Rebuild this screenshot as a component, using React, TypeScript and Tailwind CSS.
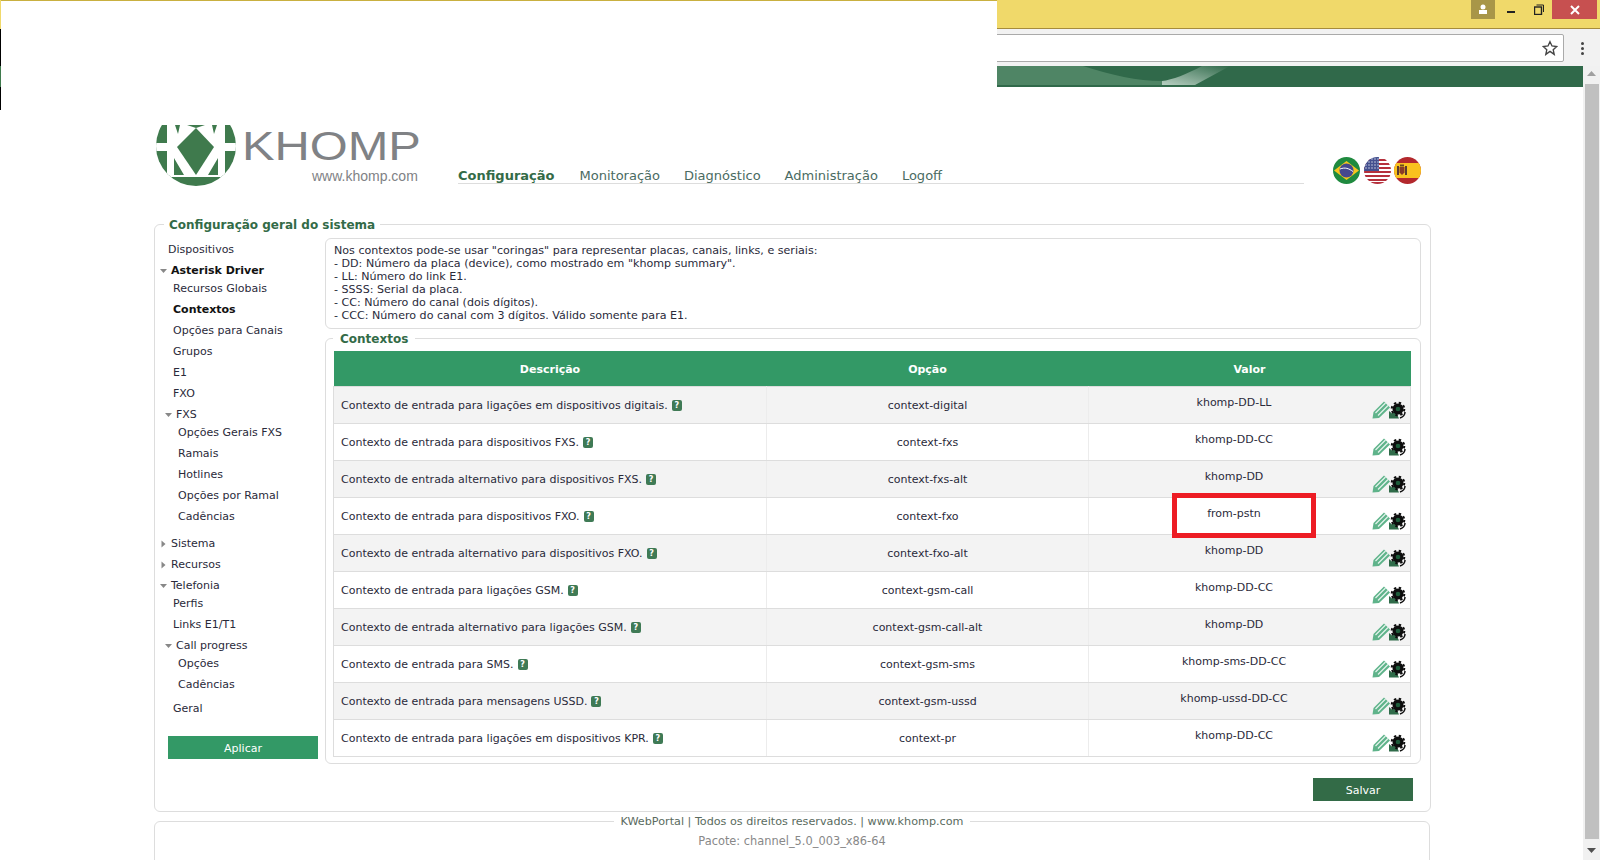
import React from "react";

const rows = [
  ["Contexto de entrada para ligações em dispositivos digitais.", "context-digital", "khomp-DD-LL"],
  ["Contexto de entrada para dispositivos FXS.", "context-fxs", "khomp-DD-CC"],
  ["Contexto de entrada alternativo para dispositivos FXS.", "context-fxs-alt", "khomp-DD"],
  ["Contexto de entrada para dispositivos FXO.", "context-fxo", "from-pstn"],
  ["Contexto de entrada alternativo para dispositivos FXO.", "context-fxo-alt", "khomp-DD"],
  ["Contexto de entrada para ligações GSM.", "context-gsm-call", "khomp-DD-CC"],
  ["Contexto de entrada alternativo para ligações GSM.", "context-gsm-call-alt", "khomp-DD"],
  ["Contexto de entrada para SMS.", "context-gsm-sms", "khomp-sms-DD-CC"],
  ["Contexto de entrada para mensagens USSD.", "context-gsm-ussd", "khomp-ussd-DD-CC"],
  ["Contexto de entrada para ligações em dispositivos KPR.", "context-pr", "khomp-DD-CC"],
];

function Arrow({ open }: { open: boolean }) {
  return (
    <svg width="8" height="8" viewBox="0 0 8 8" className="shrink-0">
      {open ? <path d="M0 2h7L3.500 6z" fill="#888" /> : <path d="M1.500 0.500v7L5.500 4z" fill="#888" />}
    </svg>
  );
}

function Leaf({ children, bold }: { children: string; bold?: boolean }) {
  return <div className={`h-[21px] leading-[18px] ${bold ? "font-bold text-[#111]" : ""}`}>{children}</div>;
}

function Head({ children, open, bold, h }: { children: string; open: boolean; bold?: boolean; h: string }) {
  return (
    <div className={`flex items-start ${h} leading-[18px]`}>
      <span className="w-[11px] pt-[5px]"><Arrow open={open} /></span>
      <span className={bold ? "font-bold text-[#111]" : ""}>{children}</span>
    </div>
  );
}

function Help() {
  return (
    <span className="inline-flex ml-[4px] w-[10px] h-[11px] items-center justify-center rounded-[2px] bg-[#3f7a55] text-white text-[8px] font-bold leading-none align-[1px]">?</span>
  );
}

function Actions() {
  return (
    <svg width="34" height="18" viewBox="0 0 34 18" className="shrink-0">
      <path d="M0.500 17.500l1-6.500L12 0.500l6 6L7 17z" fill="#5fb38a" />
      <path d="M3.500 12L13.500 2M6 14.500L16 4.500" stroke="#e4f4ec" strokeWidth="1.200" />
      <path d="M17 17.500V10l3 2.500 3-3 4 8z" fill="#2f6b49" />
      <circle cx="26" cy="8" r="5.500" fill="#0d0d0d" />
      <circle cx="26" cy="8" r="6.300" fill="none" stroke="#0d0d0d" strokeWidth="2" strokeDasharray="2.400 2.550" />
      <circle cx="26" cy="8" r="2.300" fill="#1d5c3a" />
      <path d="M33 11c0 3-2 5-5 6" stroke="#111" strokeWidth="1.500" fill="none" />
    </svg>
  );
}

function Logo() {
  return (
    <svg width="80" height="61" viewBox="0 0 80 61" className="shrink-0">
      <clipPath id="lc"><circle cx="40" cy="21" r="40" /></clipPath>
      <g clipPath="url(#lc)">
        <rect x="0" y="0" width="80" height="61" fill="#3f7a4d" />
        <path d="M11 0H69V52H11z" fill="#fff" />
        <path d="M0 18h11v8H0zM69 18h11v8H69z" fill="#fff" />
        <path d="M40 3L58 22 40 50 21 22z" fill="#3f7a4d" />
        <path d="M18 33L28 50H18zM62 33L52 50H62z" fill="#3f7a4d" />
        <path d="M19 0h5l-2 9zM61 0h-5l2 9zM31 0h18l-9 3z" fill="#3f7a4d" />
      </g>
    </svg>
  );
}

function Flags() {
  return (
    <div className="flex items-start h-fit pt-[70px] ml-[29px]">
      <svg width="27" height="27" viewBox="0 0 27 27">
        <circle cx="13.500" cy="13.500" r="13.500" fill="#1f8a3f" />
        <path d="M1 13.500L13.500 4 26 13.500 13.500 23z" fill="#f7c51e" />
        <circle cx="13.500" cy="13.500" r="7" fill="#45488f" />
        <path d="M7 12c5-2 9-.5 13 2.500" stroke="#fff" strokeWidth="1" fill="none" />
      </svg>
      <svg width="27" height="27" viewBox="0 0 27 27" className="ml-[4px]">
        <clipPath id="us"><circle cx="13.500" cy="13.500" r="13.500" /></clipPath>
        <g clipPath="url(#us)">
          <rect width="27" height="27" fill="#fff" />
          {[2, 6, 10, 14, 18, 22, 25].map((y) => <rect key={y} x="0" y={y} width="27" height="2" fill="#b5303c" />)}
          <rect width="15" height="14" fill="#44508f" />
          {[2, 5, 8, 11].map((y) => [2, 5, 8, 11, 14].map((x) => <circle key={`${x}-${y}`} cx={x} cy={y} r="0.7" fill="#dfe3f2" />))}
        </g>
      </svg>
      <svg width="27" height="27" viewBox="0 0 27 27" className="ml-[3px]">
        <clipPath id="es"><circle cx="13.500" cy="13.500" r="13.500" /></clipPath>
        <g clipPath="url(#es)">
          <rect width="27" height="27" fill="#b3282d" />
          <rect y="6" width="27" height="15" fill="#f9c21e" />
          <rect x="3" y="9" width="2" height="9" fill="#5a3a30" />
          <rect x="11" y="9" width="2" height="9" fill="#5a3a30" />
          <path d="M5.500 10h5v5.500l-2.500 2.500-2.500-2.500z" fill="#8a3a28" />
          <rect x="6" y="7.500" width="4" height="2" fill="#6a4a20" />
        </g>
      </svg>
    </div>
  );
}

export default function App() {
  return (
    <div className="relative w-[1600px] h-[860px] overflow-hidden bg-white font-['DejaVu_Sans',sans-serif] text-[11px] text-[#2a2a3a] flex flex-col">
      {/* browser title bar */}
      <div className="h-[29px] shrink-0 bg-[#f0d96a] border-b border-[#a68c3c] flex justify-end items-start">
        <div className="w-[24px] h-[19px] bg-[#a89648] flex items-center justify-center mr-[1px]">
          <svg width="10" height="11" viewBox="0 0 10 11"><circle cx="5" cy="3" r="2.500" fill="#fff" /><rect x="1" y="6" width="8" height="4" fill="#fff" /></svg>
        </div>
        <div className="w-[30px] h-[19px] flex items-center justify-center">
          <div className="w-[8px] h-[2px] mt-[5px] bg-[#222]" />
        </div>
        <div className="w-[26px] h-[19px] flex items-center justify-center">
          <svg width="10" height="11" viewBox="0 0 10 11" fill="none" stroke="#222" strokeWidth="1"><rect x="0.500" y="3" width="7" height="7.500" strokeWidth="1.400" /><path d="M2.500 1h7v7" /></svg>
        </div>
        <div className="w-[45px] h-[19px] bg-[#c75050] mr-[3px] flex items-center justify-center">
          <svg width="10" height="10" viewBox="0 0 10 10"><path d="M1 1l8 8M9 1l-8 8" stroke="#fff" strokeWidth="2" /></svg>
        </div>
      </div>
      {/* browser toolbar */}
      <div className="h-[37px] shrink-0 bg-[#f2f2f2] flex items-start pt-[5px] pl-[100px]">
        <div className="flex-1 h-[28px] bg-white border border-[#aaa] rounded-[2px] flex items-center justify-end pr-[5px]">
          <svg width="16" height="16" viewBox="0 0 24 24" fill="none" stroke="#444" strokeWidth="2"><path d="M12 2.500l3 6.500 7 .8-5.200 4.700 1.500 7L12 17l-6.300 4.500 1.500-7L2 9.800 9 9z" /></svg>
        </div>
        <div className="w-[36px] h-[28px] flex flex-col items-center justify-center gap-[2px]">
          <span className="w-[3px] h-[3px] rounded-full bg-[#444]" />
          <span className="w-[3px] h-[3px] rounded-full bg-[#444]" />
          <span className="w-[3px] h-[3px] rounded-full bg-[#444]" />
        </div>
      </div>
      <div className="flex-1 flex min-h-0">
        <main className="w-[1583px] shrink-0 flex flex-col">
          {/* banner */}
          <div className="h-[21px] shrink-0 bg-[#30694a] relative">
            <svg width="240" height="19" viewBox="0 0 240 19" className="absolute left-[997px] top-0">
              <defs>
                <linearGradient id="hl" x1="0" x2="1" y1="1" y2="0"><stop offset="0" stopColor="#b8d0c2" /><stop offset="1" stopColor="#30694a" /></linearGradient>
              </defs>
              <path d="M0 0H86C115 9 140 15 165 15L198 19H0z" fill="#4f8565" />
              <path d="M165 15C175 14 190 8 205 0H233L198 19H165z" fill="url(#hl)" />
            </svg>
          </div>
          {/* header */}
          <header className="h-[128px] shrink-0 flex pl-[156px]">
            <div className="w-[302px] shrink-0 pt-[38px] flex items-start">
              <Logo />
              <div className="ml-[6px] pt-[3px]">
                <div className="font-['Liberation_Sans',sans-serif] text-[41px] leading-[36px] w-[150px] text-[#808285] scale-x-[1.19] origin-left whitespace-nowrap">KHOMP</div>
                <div className="font-['Liberation_Sans',sans-serif] text-[14px] leading-[16px] mt-[4px] ml-[70px] w-[110px] text-[#808285] whitespace-nowrap">www.khomp.com</div>
              </div>
            </div>
            <nav className="w-[846px] shrink-0 h-[97px] border-b border-[#ddd] flex items-start gap-[24px] text-[13px] leading-[16px] text-[#4a6b62] pt-[81px]">
              <span className="font-bold text-[#336b47] mr-[1px]">Configuração</span>
              <span>Monitoração</span>
              <span>Diagnóstico</span>
              <span>Administração</span>
              <span>Logoff</span>
            </nav>
            <Flags />
          </header>
          {/* main fieldset */}
          <fieldset className="ml-[154px] w-[1277px] shrink-0 border border-[#ddd] rounded-[6px] pb-[10px]">
            <legend className="ml-[9px] px-[5px] pt-[2px] text-[12px] leading-[16px] font-bold text-[#336b47]">Configuração geral do sistema</legend>
            <div className="flex">
              <aside className="w-[170px] shrink-0 pl-[5px] pt-[8px]">
                <div className="pl-[8px]"><Leaf>Dispositivos</Leaf></div>
                <Head open bold h="h-[18px]">Asterisk Driver</Head>
                <div className="pl-[13px]">
                  <Leaf>Recursos Globais</Leaf>
                  <Leaf bold>Contextos</Leaf>
                  <Leaf>Opções para Canais</Leaf>
                  <Leaf>Grupos</Leaf>
                  <Leaf>E1</Leaf>
                  <Leaf>FXO</Leaf>
                </div>
                <div className="pl-[5px]"><Head open h="h-[18px]">FXS</Head></div>
                <div className="pl-[18px]">
                  <Leaf>Opções Gerais FXS</Leaf>
                  <Leaf>Ramais</Leaf>
                  <Leaf>Hotlines</Leaf>
                  <Leaf>Opções por Ramal</Leaf>
                  <Leaf>Cadências</Leaf>
                </div>
                <div className="mt-[6px]">
                  <Head open={false} h="h-[21px]">Sistema</Head>
                  <Head open={false} h="h-[21px]">Recursos</Head>
                  <Head open h="h-[18px]">Telefonia</Head>
                </div>
                <div className="pl-[13px]">
                  <Leaf>Perfis</Leaf>
                  <Leaf>Links E1/T1</Leaf>
                </div>
                <div className="pl-[5px]"><Head open h="h-[18px]">Call progress</Head></div>
                <div className="pl-[18px]">
                  <Leaf>Opções</Leaf>
                  <Leaf>Cadências</Leaf>
                </div>
                <div className="pl-[13px] mt-[3px]"><Leaf>Geral</Leaf></div>
                <button className="block mt-[15px] ml-[8px] w-[150px] h-[23px] pt-[2px] leading-[15px] bg-[#339966] text-white text-[11px]">Aplicar</button>
              </aside>
              <section className="w-[1096px] shrink-0 pt-[5px]">
                <div className="h-[91px] border border-[#ddd] rounded-[6px] pt-[5px] px-[8px] leading-[13px] text-[11.1px]">
                  <div>Nos contextos pode-se usar "coringas" para representar placas, canais, links, e seriais:</div>
                  <div>- DD: Número da placa (device), como mostrado em "khomp summary".</div>
                  <div>- LL: Número do link E1.</div>
                  <div>- SSSS: Serial da placa.</div>
                  <div>- CC: Número do canal (dois dígitos).</div>
                  <div>- CCC: Número do canal com 3 dígitos. Válido somente para E1.</div>
                </div>
                <fieldset className="mt-[1px] border border-[#ddd] rounded-[6px] pl-[7px] pr-[9px] pb-[6px]">
                  <legend className="ml-[0px] px-[7px] pt-[2px] text-[12px] leading-[14px] font-bold text-[#336b47]">Contextos</legend>
                  <table className="mt-[5px] w-[1077px] table-fixed border-collapse">
                    <colgroup>
                      <col className="w-[433px]" />
                      <col className="w-[322px]" />
                      <col className="w-[322px]" />
                    </colgroup>
                    <thead>
                      <tr className="h-[35px] bg-[#339966] text-white font-bold">
                        <th className="font-bold pt-[4px]">Descrição</th>
                        <th className="font-bold pt-[4px]">Opção</th>
                        <th className="font-bold pt-[4px]">Valor</th>
                      </tr>
                    </thead>
                    <tbody>
                      {rows.map((r, i) => (
                        <tr key={r[1]} className={`h-[37px] ${i % 2 === 0 ? "bg-[#f3f3f3]" : "bg-white"}`}>
                          <td className="border-y border-l border-r border-y-[#ddd] border-l-[#ddd] border-r-[#ececec] pl-[7px] pt-[3px] whitespace-nowrap">{r[0]}<Help /></td>
                          <td className="border-y border-r border-y-[#ddd] border-r-[#ececec] text-center pt-[3px]">{r[1]}</td>
                          <td className="border-y border-r border-[#ddd] p-0 relative">
                            <div className="flex h-[36px]">
                              <div className="flex-1 text-center pl-[7px] pt-[8px]">{r[2]}</div>
                              <div className="self-end mb-[4px] mr-[4px]"><Actions /></div>
                            </div>
                            {r[2] === "from-pstn" && (
                              <div className="absolute left-[83px] top-[-5px] w-[144px] h-[45px] border-[5px] border-[#ed1c24]" />
                            )}
                          </td>
                        </tr>
                      ))}
                    </tbody>
                  </table>
                </fieldset>
                <div className="flex justify-end pr-[8px] mt-[14px]">
                  <button className="w-[100px] h-[23px] pt-[2px] leading-[15px] bg-[#336b47] text-white text-[11px]">Salvar</button>
                </div>
              </section>
            </div>
          </fieldset>
          {/* footer */}
          <fieldset className="ml-[154px] mt-[2px] w-[1276px] h-[80px] shrink-0 border border-[#ddd] rounded-[6px] text-center">
            <legend className="mx-auto px-[7px] leading-[16px] text-[11.2px] text-[#5a6b60]">KWebPortal | Todos os direitos reservados. | www.khomp.com</legend>
            <div className="pt-[3px] leading-[16px] text-[11.4px] text-[#888]">Pacote: channel_5.0_003_x86-64</div>
          </fieldset>
        </main>
        {/* scrollbar */}
        <div className="w-[17px] shrink-0 bg-[#f1f1f1] flex flex-col items-center pt-[5px]">
          <svg width="9" height="6" viewBox="0 0 9 6" className="shrink-0"><path d="M0 5h9L4.500 0z" fill="#a0a0a0" /></svg>
          <div className="w-[14px] h-[755px] mt-[7px] bg-[#c0c0c0]" />
          <svg width="9" height="6" viewBox="0 0 9 6" className="shrink-0 mt-[9px]"><path d="M0 0h9L4.500 5z" fill="#505050" /></svg>
        </div>
      </div>
      {/* pieces of the blanked-out area */}
      <div className="absolute left-0 top-0 w-[997px] h-[110px] bg-white border-t border-[#c9b040]" />
      <div className="absolute left-0 top-[29px] w-[1px] h-[81px] bg-black" />
      <div className="absolute left-0 top-[66px] w-[1px] h-[21px] bg-[#3f7a4d]" />
      <div className="absolute left-0 top-0 w-[1px] h-[29px] bg-[#f0d96a]" />
    </div>
  );
}
